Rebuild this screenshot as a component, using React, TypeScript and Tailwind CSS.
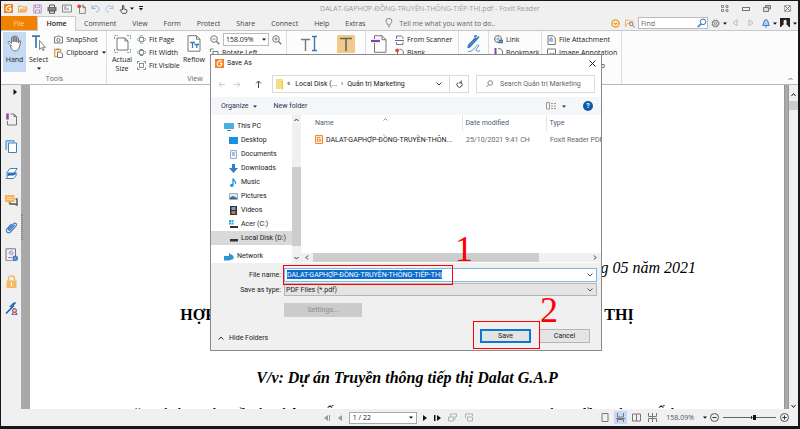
import React from "react";

type Kids = { children?: React.ReactNode };

function Logo({ s = 10 }: { s?: number }) {
  return (
    <svg width={s} height={s} viewBox="0 0 10 10" className="shrink-0">
      <rect width="10" height="10" fill="#f6831e" />
      <path d="M7.6 1.8C4.6 1.8 2.6 3.2 2.4 5.3c-.1 1.8 1.2 2.8 2.8 2.7 1.5-.1 2.5-1.2 2.5-2.9H5.2M7 3.6v1.5" stroke="#fff" strokeWidth="1.2" fill="none" />
    </svg>
  );
}

function Svg({ w, h, children }: { w: number; h: number } & Kids) {
  return (
    <svg width={w} height={h} viewBox={`0 0 ${w} ${h}`} fill="none" stroke="#777" className="shrink-0">
      {children}
    </svg>
  );
}

const Down = ({ c = "#111" }: { c?: string }) => (
  <svg width="4" height="3" viewBox="0 0 4 3" className="shrink-0"><path d="M0 0.4h4L2 2.8z" fill={c} /></svg>
);

function TitleBar() {
  return (
    <header className="flex h-[15px] shrink-0 items-center bg-[#f0f0f0] pl-[3px] pr-[7px]">
      <div className="flex items-center gap-[5px]">
        <Logo s={9} />
        <button aria-label="Open"><Svg w={10} h={10}><path d="M.6 8.5V2h3l1 1h4v1.5" stroke="#dba352" /><path d="M.6 8.7 2.5 4.6H10L8.2 8.7z" fill="#f0b765" stroke="none" /></Svg></button>
        <button aria-label="Save"><Svg w={9} h={10}><path d="M.8 1h7.4v8H.8zM2.5 1v2.6h4V1M2.5 9V6h4v3" stroke="#b495c6" /></Svg></button>
        <button aria-label="Print"><Svg w={10} h={10}><path d="M2.5 3V1h5v2M2.5 7h5v2.3h-5z" stroke="#555" /><rect x=".5" y="3" width="9" height="4.2" fill="#666" stroke="none" /><path d="M2 5h6" stroke="#8cb4dc" /></Svg></button>
        <button aria-label="Mail"><Svg w={10} h={9}><path d="M.5 1h9v7h-9zM2 3h2.5M2 5h5" stroke="#888" /></Svg></button>
        <button aria-label="New"><Svg w={9} h={10}><path d="M2.5 3v6.4h5.8V3.4L6 1.2H4.5" stroke="#888" /><path d="M6 1v2.6h2.5" stroke="#777" /><circle cx="2.2" cy="2.3" r="1.9" fill="#e0443a" stroke="none" /></Svg></button>
        <button aria-label="Undo"><Svg w={9} h={9}><path d="M1 1v3.5h3.5M1.2 4.3C2.5 1.8 6 1.2 7.6 3.4 8.8 5.4 7.5 7.5 5 8.3" stroke="#8fb0d8" /></Svg></button>
        <button aria-label="Redo"><Svg w={9} h={9}><path d="M8 1v3.5H4.5M7.8 4.3C6.5 1.8 3 1.2 1.4 3.4.2 5.4 1.5 7.5 4 8.3" stroke="#a9c0dd" /></Svg></button>
        <button aria-label="Touch mode" className="flex items-center gap-[2px]"><Svg w={9} h={10}><path d="M3.5 6V1.5h1.3V5l3 .8v2L7 9.4H3.5L1 6.3l1-.6z" stroke="#555" /></Svg><Down /></button>
        <button aria-label="Customize"><Svg w={4} h={5}><path d="M0 .5h4" stroke="#111" /><path d="M0 2h4L2 4.6z" fill="#111" stroke="none" /></Svg></button>
      </div>
      <div className="flex-1 pr-1 text-center text-[7px] leading-[15px] text-[#9c9c9c]">DALAT-GAPHỢP-ĐỒNG-TRUYỀN-THÔNG-TIẾP-THỊ.pdf - Foxit Reader</div>
      <div className="flex items-center gap-[13px]">
        <button aria-label="Full screen"><Svg w={8} h={7}><path d="M.5.5h2v2h-2zM5 .5h2v2H5zM.5 4.5h2v2h-2zM5 4.5h2v2H5z" stroke="#888" /></Svg></button>
        <button aria-label="Minimize"><Svg w={8} h={4}><rect x=".5" y=".5" width="7" height="3" /></Svg></button>
        <button aria-label="Restore"><Svg w={8} h={7}><path d="M2.5.5h5v3.5h-5z" fill="#bbb" /><path d="M.5 2.5h5v4h-5z" fill="#ddd" /></Svg></button>
        <button aria-label="Close"><Svg w={7} h={7}><rect x=".5" y=".5" width="6" height="6" stroke="#aaa" /><path d="m1 1 5 5M6 1 1 6" stroke="#777" /></Svg></button>
      </div>
    </header>
  );
}

function TabBar() {
  return (
    <nav className="flex h-[15px] shrink-0 items-stretch border-b border-[#c8c8c8] bg-[#f0f0f0] text-[7px] leading-[15px] text-[#444]">
      <button className="w-9 bg-[#f08200] text-[#fbd7a8]">File</button>
      <button className="-mb-px h-[15px] w-[39px] border-x border-t border-[#c8c8c8] bg-[#fcfcfc] leading-[14px] font-semibold text-[#222]">Home</button>
      <div className="flex gap-4 pl-2">
        {["Comment", "View", "Form", "Protect", "Share", "Connect", "Help", "Extras"].map((t) => <button key={t}>{t}</button>)}
      </div>
      <label className="flex flex-1 items-center gap-[6px] pl-5">
        <Svg w={8} h={10}><path d="M2.8 7C2.8 5.5 1 5 1 3.2a2.9 2.9 0 0 1 5.9 0C6.9 5 5 5.5 5 7zM3 8.8h2" stroke="#888" /></Svg>
        <input className="w-28 bg-transparent outline-none placeholder:text-[#666]" placeholder="Tell me what you want to do.." />
      </label>
      <div className="flex items-center gap-[3px] pr-px">
        <button aria-label="Favorites"><Svg w={9} h={9}><circle cx="4.5" cy="4.5" r="3.5" stroke="#f0a13c" strokeWidth="1.6" fill="#fff" /><path d="M4.5 6.6 2.6 4.7c-.5-1.5 1.2-2 1.9-.8.7-1.2 2.4-.7 1.9.8z" fill="#f0a13c" stroke="none" /></Svg></button>
        <button aria-label="Search folder" className="pl-[2px]"><Svg w={10} h={9}><path d="M.5 8V1h3l1 1h4M.5 8l2-4H5" stroke="#eeb368" /><circle cx="6.3" cy="5" r="1.8" /><path d="m7.6 6.4 2 2.2" /></Svg></button>
        <label className="flex h-3 w-[70px] items-center border border-[#bbb] bg-white pl-[2px]">
          <input className="w-0 flex-1 outline-none placeholder:text-[#666]" placeholder="Find" />
          <Svg w={10} h={10}><circle cx="6" cy="3.8" r="2.8" stroke="#2f76bd" /><path d="m4 6-3.2 3" stroke="#2f76bd" strokeWidth="1.6" /></Svg>
        </label>
        <button aria-label="Settings" className="flex items-center gap-[3px]"><Svg w={9} h={9}><circle cx="4.5" cy="4.5" r="3.5" strokeDasharray="1.8 1" /><circle cx="4.5" cy="4.5" r="2.9" /><circle cx="4.5" cy="4.5" r="1" /></Svg><Down /></button>
        <button aria-label="Previous" className="pl-[2px]"><Svg w={6} h={8}><path d="M5 .8v6L1 3.8z" stroke="#bbb" /></Svg></button>
        <button aria-label="Next" className="pl-[7px]"><Svg w={6} h={8}><path d="M1 .8v6l4-3z" stroke="#bbb" /></Svg></button>
        <button aria-label="Notifications" className="flex items-center gap-[3px] pl-[5px]"><Svg w={8} h={10}><path d="M.6 7.5C2 6.2 1.2 2 4 1.5c2.8.5 2 4.7 3.4 6z" fill="#a9cdef" stroke="#3b83c9" /><path d="M3 9h2" stroke="#3b83c9" /></Svg><Down /></button>
        <button aria-label="Account" className="flex items-center gap-[3px]"><Svg w={10} h={10}><rect width="10" height="9" fill="#222" stroke="none" /><path d="M3.5 4a1.6 2.2 0 1 1 3.2 0c0 1.5-.6 1.8-.3 2.6L8.5 8v2h-7V8l2.2-1.4C4 5.8 3.5 5.5 3.5 4z" fill="#eee" stroke="none" /></Svg><Down /></button>
      </div>
    </nav>
  );
}

function Item({ icon, children }: { icon: React.ReactNode } & Kids) {
  return <button className="flex h-[13px] items-center gap-[3px] whitespace-nowrap">{icon}{children}</button>;
}

function Ribbon() {
  return (
    <section className="flex h-[54px] shrink-0 items-stretch border-b border-[#b9b9b9] bg-[#fcfcfc] text-[7px] leading-[9px] text-[#222]">
      <div className="flex w-[106px] flex-col justify-between border-r border-[#ddd] pl-[2px]">
        <div className="flex items-start">
          <button className="mt-px flex h-10 w-6 flex-col items-center bg-[#c5daf5] pt-[3px]">
            <Svg w={16} h={17}><path d="M4.5 11 1.2 7.6c-.5-1.2.8-1.7 1.6-.9L4.5 8.4V3c.2-1.1 1.5-1.1 1.7 0v4-5.2c.2-1.1 1.6-1.1 1.8 0V7 1.800c.2-1.100 1.600-1.100 1.800 0V7.200 3.400c.2-1 1.500-1 1.700 0V8l.8-2c.8-.8 1.700-.2 1.400.7l-1.500 6c-.6 2-2 3.300-4.200 3.300-2.500 0-3.500-2-4.500-5z" fill="#fff" stroke="#555" strokeWidth=".8" /></Svg>
            <span className="pt-[3px]">Hand</span>
          </button>
          <button className="ml-[2px] mt-1 flex w-[22px] flex-col items-center">
            <Svg w={16} h={17}><path d="M1 1.2h8M5 1v12" stroke="#3978bd" strokeWidth="1.7" /><path d="M8.5 5.5v9l2-1.8 1.5 3 1.2-.7-1.5-2.7h2.8z" fill="#fff" stroke="#777" strokeWidth=".9" /></Svg>
            <span className="pt-[3px]">Select</span>
            <span className="pt-[3px]"><Down /></span>
          </button>
          <div className="ml-[5px] mt-[2px] flex flex-col">
            <Item icon={<Svg w={9} h={9}><path d="M.5 2h2l1-1h2l1 1h2v6h-8z" /><circle cx="4.5" cy="5" r="1.6" /></Svg>}>SnapShot</Item>
            <Item icon={<Svg w={9} h={10}><path d="M3 8.5H.7V1.5h6v2" stroke="#e2a04a" strokeWidth="1.3" /><path d="M3.5 4h3l2 2v3.5h-5z" /><path d="M2.5 1.2h2.4" /></Svg>}>Clipboard <span className="pl-px"><Down /></span></Item>
          </div>
        </div>
        <div className="pb-px text-center leading-[9px] text-[#666]">Tools</div>
      </div>
      <div className="flex w-[180px] flex-col justify-between border-r border-[#ddd]">
        <div className="flex items-start">
          <button className="mt-1 ml-1 flex w-[22px] flex-col items-center">
            <Svg w={17} h={18}><path d="M3 3h8l3 3v9H3z" fill="#fff" /><path d="M11 3v3h3" /><path d="M.5 4V.5H4M13 .5h3.5V4M.5 14v3.5H4M13 17.5h3.5V14" stroke="#6aaa8c" strokeDasharray="2 .8" /></Svg>
            <span className="pt-[2px]">Actual<br />Size</span>
          </button>
          <div className="mt-[2px] ml-1 flex w-[46px] flex-col">
            {["Fit Page", "Fit Width", "Fit Visible"].map((t, i) => (
              <Item key={t} icon={<Svg w={9} h={9}><rect x="2.5" y="2.5" width="4" height="4" strokeWidth=".8" /><path d={i === 2 ? "M.5 2.5v-2h2M6.5.5h2v2M.5 6.5v2h2M6.5 8.5h2v-2" : i ? "M1.5 3 .3 4.5 1.5 6M7.5 3l1.2 1.5L7.5 6M3 1.5h3M3 7.5h3" : "M3 1.5 4.5.3 6 1.5M3 7.5l1.5 1.2L6 7.5M1.5 3 .3 4.5 1.5 6M7.5 3l1.2 1.5L7.5 6"} stroke="#5c9d80" /></Svg>}>{t}</Item>
            ))}
          </div>
          <button className="mt-1 flex w-[22px] flex-col items-center">
            <Svg w={14} h={17}><path d="M1 .7h8.5l3.5 3.5v12H1z" fill="#fff" /><path d="M9.5.7v3.5H13" /><path d="M3 7.5h5M5.5 7.5V13M7.5 9.5H12M9.8 9.5V13" stroke="#3978bd" strokeWidth="1.3" /></Svg>
            <span className="pt-[3px]">Reflow</span>
          </button>
          <div className="mt-[2px] ml-[5px] flex flex-col">
            <div className="flex h-[13px] items-center gap-[3px]">
              <button aria-label="Zoom out"><Svg w={10} h={10}><circle cx="4" cy="4" r="3.3" /><path d="M2.5 4h3" stroke="#4c9a76" /><path d="m6.5 6.5 2.8 2.8" strokeWidth="1.3" /></Svg></button>
              <button className="flex h-[13px] w-[46px] items-center justify-between border border-[#bbb] bg-white px-[2px]">158.09% <Down /></button>
              <button aria-label="Zoom in"><Svg w={10} h={10}><circle cx="4" cy="4" r="3.3" /><path d="M2.5 4h3M4 2.5v3" stroke="#4c9a76" /><path d="m6.5 6.5 2.8 2.8" strokeWidth="1.3" /></Svg></button>
            </div>
            <Item icon={<Svg w={9} h={9}><path d="M3 3.5h5v5H3z" /><path d="M.5 4V1h3" stroke="#5c9d80" /></Svg>}>Rotate Left</Item>
          </div>
        </div>
        <div className="pb-px pr-[3px] text-center leading-[9px] text-[#666]">View</div>
      </div>
      <div className="flex w-[79px] items-start gap-[18px] border-r border-[#ddd] pt-1 pl-[14px]">
        <button aria-label="Typewriter"><Svg w={18} h={18}><path d="M0 4.5h9M4.5 4.5V16" strokeWidth="1.4" /><path d="M11 1.5h5M11 15.5h5M13.5 1.5v14" stroke="#3978bd" strokeWidth="1.4" /></Svg></button>
        <button aria-label="Highlight" className="flex size-[18px] items-center justify-center bg-[#f3c98a]"><Svg w={14} h={16}><path d="M1 2.5h12M7 2.5V15" stroke="#666" strokeWidth="1.6" /></Svg></button>
      </div>
      <div className="flex w-[93px] items-start gap-2 border-r border-[#ddd] pl-[5px]">
        <button aria-label="Convert" className="mt-1"><Svg w={16} h={18}><path d="M3.5 4V.7H11l4 4v12.6H3.5V8M11 .7v4h4" /><path d="M0 6h9" stroke="#8244a8" strokeWidth="2.2" /></Svg></button>
        <div className="mt-[2px] flex flex-col">
          <Item icon={<Svg w={9} h={10}><path d="M1.5 4V1h5L8 2.5V4M1.5 7v2.5H8V7" /><path d="M0 5.5h9" stroke="#3978bd" /></Svg>}>From Scanner</Item>
          <Item icon={<Svg w={9} h={10}><path d="M2.5 3v6h5.8V3.4L6 1.2H4.5" /><circle cx="2.2" cy="2.3" r="1.9" fill="#e0443a" stroke="none" /></Svg>}>Blank</Item>
        </div>
      </div>
      <div className="flex w-[30px] items-start justify-center border-r border-[#ddd] pt-1">
        <button aria-label="Sign"><Svg w={16} h={18}><path d="m2 13 1-3 7-7.5M9 6l4-4.5M8 1.5l3-1M3 12.5l8-8.5" stroke="#3978bd" strokeWidth="1.7" /><path d="M2 16.5c3 .5 5-1.500 8-5 2-2.500 4-1.500 2 .5-3 3-3 4.500 2 4" stroke="#5a93d0" /></Svg></button>
      </div>
      <div className="flex w-[53px] flex-col border-r border-[#ddd] pt-[2px] pl-[5px]">
        <Item icon={<Svg w={9} h={9}><circle cx="4" cy="4" r="3.5" /><path d="M4 .5v7M.5 4h7" strokeWidth=".6" /><path d="M4 7.5h4.5v-2H5" stroke="#3978bd" strokeWidth="1.3" /></Svg>}>Link</Item>
        <Item icon={<Svg w={9} h={9}><path d="M4 .7h2.5L8.5 3v5.5H3" /><path d="M1.5 0v6" stroke="#8244a8" strokeWidth="2" /></Svg>}>Bookmark</Item>
      </div>
      <div className="flex w-20 flex-col border-r border-[#ddd] pt-[2px] pl-[5px]">
        <Item icon={<Svg w={9} h={10}><path d="M1 .7h5L8.3 3v6.5H1z" /><path d="M3 6.5V3.5c.3-1 1.7-1 2 0V7" stroke="#3978bd" /></Svg>}>File Attachment</Item>
        <Item icon={<Svg w={9} h={9}><path d="M.5 1h8v7h-8z" /><path d="m1 7.5 2.5-3L5 6l1.5-1.5L8 6.5v1z" fill="#5c9d80" stroke="none" /></Svg>}>Image Annotation</Item>
        <Item icon={<Svg w={9} h={9}><path d="M.5 1h8v7h-8zM3.5 3v3.5l3-1.7z" /></Svg>}>Audio &amp; Video</Item>
      </div>
      <div className="flex flex-1 items-end justify-end pr-[5px] pb-[3px]"><button aria-label="Collapse"><Svg w={5} h={4}><path d="M.5 3 2.5 1l2 2" /></Svg></button></div>
    </section>
  );
}

function SideBar() {
  const b = "#3f82c4";
  const items: [string, React.ReactNode][] = [
    ["Bookmarks", <><path d="M5.5 1H9l2.5 2.5V12h-9V8M9 1v2.5h2.5" /><path d="M2.5.5v6" stroke="#8244a8" strokeWidth="2.5" /></>],
    ["Pages", <><path d="M1 10V.8h8v1.5" stroke={b} fill="#cfe2f5" /><path d="M3.5 3h8v9.5h-8z" fill="#fff" stroke={b} /></>],
    ["Layers", <><path d="m1 11.5 3.5-4.3H12l-3.5 4.3z" stroke={b} fill="#fff" /><path d="m.8 8.5 3.5-3.3H12L8.5 8.5z" fill="#1f68b0" stroke="none" /><path d="M1.5 6 5 1.5h7.2L9 6z" stroke={b} fill="#fff" /></>],
    ["Comments", <><path d="M10.5 5h1.5v6l-2-1H5V8" stroke="#555" strokeWidth="1.4" /><path d="M0 1h9.5v7H5l-2 2V8H0z" fill="#f6b35b" stroke="none" /><path d="M2 3.5h6M2 5.5h6" stroke="#fbdcae" /></>],
    ["Attachments", <path d="M9.5 4 5 9c-.8.8-2-.2-1.2-1L8.5 2.8c1.7-1.7 4 .3 2.5 2L5.5 11c-2.5 2-5.3-.5-3.5-3L6.5 3" stroke={b} strokeWidth="1.2" />],
    ["Signatures", <><path d="M1 .8h9.5v12H1z" /><path d="M4 5.5c0-3 4-3 4-.5S4.5 7 5.5 4.5M3 9.5h4" stroke="#a05fc0" strokeWidth=".9" /><circle cx="10.3" cy="10.3" r="2.7" fill="#3978bd" stroke="none" /><path d="m9.2 11.3 2.2-2" stroke="#fff" strokeWidth=".8" /></>],
    ["Security", <><path d="M3.5 6V3.5c0-3.5 6-3.5 6 0V6" stroke="#f0b55f" strokeWidth="1.4" /><rect x="1.5" y="5.5" width="10" height="7.5" fill="#f3ba66" stroke="none" /><path d="M6.5 7.5v3.5" stroke="#fff" strokeWidth="1.3" /></>],
    ["Digital signatures", <><path d="M1 11.5 9 3.5M8 3l2.5-2.5M5 5l4-4" stroke="#1f68b0" strokeWidth="1.7" /><circle cx="9.5" cy="8.5" r="2" stroke="#8244a8" fill="#f6c94c" /><path d="m8.3 10-1.5 3 2.7-1 2.7 1-1.5-3" stroke="#8244a8" /></>],
  ];
  return (
    <aside className="flex w-5 shrink-0 flex-col items-center bg-[#f0f0f0] pt-[4px]">
      <button aria-label="Expand" className="mb-[18px] ml-2"><Svg w={4} h={6}><path d="M.5 0v6L4 3z" fill="#111" stroke="none" /></Svg></button>
      <div className="flex flex-col gap-[14px]">
        {items.map(([n, p]) => <button key={n} aria-label={n}><Svg w={13} h={13}>{p}</Svg></button>)}
      </div>
    </aside>
  );
}

function Document() {
  return (
    <main className="flex min-h-0 flex-1">
      <SideBar />
      <div className="flex w-[9px] shrink-0 items-center bg-[#a9a9a9]"><span className="mb-10 h-[26px] w-[2px] border-x border-dotted border-[#888]" /></div>
      <article className="flex min-w-0 flex-1 flex-col overflow-hidden bg-white font-['Liberation_Serif','Times_New_Roman',serif] text-base leading-5 text-black">
        <p className="mt-[173px] pr-[88px] text-right italic">Hà Nội, ngày 15 tháng 05 năm 2021</p>
        <h1 className="mt-[27px] text-center font-bold whitespace-nowrap">HỢP ĐỒNG CUNG CẤP DỊCH VỤ TRUYỀN THÔNG TIẾP THỊ</h1>
        <h2 className="mt-[43px] text-center font-bold italic whitespace-nowrap">V/v: Dự án Truyền thông tiếp thị Dalat G.A.P</h2>
        <p className="mt-[17px] text-center whitespace-nowrap">Căn cứ theo nhu cầu hai bên, CẤP DỊCH VU TRUYEN THONG, hợp đồng theo SỐ hai</p>
      </article>
      <div className="w-[5px] shrink-0 border-x border-[#999] bg-[#aaa]" />
      <div className="flex w-[9px] shrink-0 flex-col items-center bg-[#f0f0f0] pt-[7px]">
        <Svg w={5} h={5}><path d="M.5 4 2.5 1.5 4.5 4" stroke="#222" /></Svg>
        <span className="mt-[4px] h-[9px] w-full bg-[#cdcdcd]" />
        <span className="flex-1" />
        <Svg w={5} h={5}><path d="M.5 1 2.5 3.5 4.5 1" stroke="#222" /></Svg>
      </div>
    </main>
  );
}

function StatusBar() {
  return (
    <footer className="flex h-[17px] shrink-0 items-center bg-[#f0f0f0] pr-[9px] text-[7px] leading-3 text-[#222]">
      <div className="flex flex-1 items-center justify-center gap-[6px] pl-[197px]">
        <button aria-label="First page"><Svg w={8} h={6}><path d="M4 0v6L0 3zM5 0h1v6H5z" fill="#999" stroke="none" /></Svg></button>
        <button aria-label="Previous page"><Svg w={5} h={6}><path d="M4 0v6L0 3z" fill="#999" stroke="none" /></Svg></button>
        <button className="flex h-3 w-[68px] items-center justify-between border border-[#aaa] bg-white px-[3px] leading-[10px]">1 / 22 <Down /></button>
        <button aria-label="Next page"><Svg w={5} h={6}><path d="M0 0v6l4-3z" fill="#111" stroke="none" /></Svg></button>
        <button aria-label="Last page"><Svg w={8} h={6}><path d="M3 0v6l4-3zM0 0h1.5v6H0z" fill="#111" stroke="none" /></Svg></button>
        <button aria-label="Previous view"><Svg w={10} h={9}><path d="M2.5 4V1h6v3M.5 4h5v4h-5zM7 3v4" stroke="#a9b9b0" /></Svg></button>
        <button aria-label="Next view"><Svg w={10} h={9}><path d="M1.5 5V1h7v2M3.5 4h5v4h-5z" stroke="#a9b9b0" /></Svg></button>
      </div>
      <div className="flex items-center gap-[3px]">
        <button aria-label="Single page" className="p-[2px]"><Svg w={8} h={9}><path d="M1 .5h6v8H1z" /></Svg></button>
        <button aria-label="Continuous" className="bg-[#c5daf5] p-[2px]"><Svg w={9} h={9}><path d="M1.5 0v4h6V0M0 5.5h9M1.5 9V6.5h6V9" /></Svg></button>
        <button aria-label="Facing" className="p-[2px]"><Svg w={9} h={9}><path d="M.5 1h4v7h-4zM4.5 1h4v7h-4z" /></Svg></button>
        <button aria-label="Continuous facing" className="p-[2px]"><Svg w={9} h={9}><path d="M.5 0v3.5h8V0M4.5 0v9M.5 9V5.5h8V9" /></Svg></button>
        <button className="ml-[4px] flex items-center gap-[9px] text-[#555]">158.09% <Down /></button>
        <div className="flex items-center gap-[4px]">
          <button aria-label="Zoom out"><Svg w={9} h={9}><circle cx="4.5" cy="4.5" r="4" stroke="#555" /><path d="M2.5 4.5h4" stroke="#333" /></Svg></button>
          <span className="flex h-[5px] w-[53px] items-center justify-center bg-[linear-gradient(#666,#666)] bg-[length:100%_1px] bg-center bg-no-repeat pl-2"><span className="mr-px h-[3px] w-px bg-[#333]" /><span className="h-[5px] w-[3px] bg-[#111]" /></span>
          <button aria-label="Zoom in"><Svg w={9} h={9}><circle cx="4.5" cy="4.5" r="4" stroke="#555" /><path d="M2.5 4.5h4M4.5 2.5v4" stroke="#333" /></Svg></button>
        </div>
      </div>
    </footer>
  );
}

const places: [string, React.ReactNode][] = [
  ["Desktop", <rect x="0" y="1" width="9" height="7" fill="#1a8fe3" stroke="none" />],
  ["Documents", <><path d="M1.5.5h6v8h-6z" fill="#eef6fc" stroke="#9ab" /><path d="M3 3h3M3 5h3" stroke="#3c8ed0" /></>],
  ["Downloads", <path d="M3 0h3v4h3L4.5 9 0 4h3z" fill="#2f80c8" stroke="none" />],
  ["Music", <><path d="M4 7V.5C4.5 2.5 7.5 3 6.5 6" stroke="#1a8fe3" strokeWidth="1.3" /><ellipse cx="2.8" cy="7.5" rx="1.8" ry="1.4" fill="#1a8fe3" stroke="none" /></>],
  ["Pictures", <><path d="M.5 1.5h8v6h-8z" fill="#d7ecf8" stroke="#aaa" /><path d="M1 7V5.5l3-1.5 4 2v1z" fill="#376d8e" stroke="none" /></>],
  ["Videos", <><rect x="1" y="0" width="7" height="9" fill="#333" stroke="none" /><rect x="2.5" y="1" width="4" height="3" fill="#7a9fd4" stroke="none" /><rect x="2.5" y="5" width="4" height="3" fill="#b0824a" stroke="none" /></>],
  ["Acer (C:)", <><path d="M0 0h2v2H0zM2.5 0h2v2h-2zM0 2.5h2v2H0zM2.5 2.5h2v2h-2z" fill="#29abe2" stroke="none" /><rect x="1" y="6" width="8" height="2" fill="#333" stroke="none" /></>],
  ["Local Disk (D:)", <rect x="1" y="5" width="8" height="2.5" fill="#333" stroke="none" />],
];

function Dialog() {
  return (
    <div role="dialog" aria-label="Save As" className="absolute top-[53px] left-[209px] flex h-[297px] w-[392px] flex-col border border-[#8a8a8a] bg-white font-['Roboto','Open_Sans',sans-serif] text-[7px] leading-[10px] text-[#222]">
      <div className="flex h-4 items-center justify-between pr-[5px] pl-[4px]">
        <div className="flex items-center gap-[3px]"><Logo s={9} />Save As</div>
        <button aria-label="Close"><Svg w={7} h={7}><path d="m.5.5 6 6M6.5.5l-6 6" stroke="#222" /></Svg></button>
      </div>
      <div className="flex h-[26px] items-center pr-[6px] pl-[7px]">
        <div className="flex w-[49px] items-center gap-[9px]">
          <button aria-label="Back"><Svg w={7} h={7}><path d="M7 3.5H1M3.5 1 1 3.5 3.5 6" stroke="#ccc" /></Svg></button>
          <button aria-label="Forward"><Svg w={7} h={7}><path d="M0 3.5h6M3.5 1 6 3.5 3.5 6" stroke="#ccc" /></Svg></button>
          <button aria-label="Up" className="ml-[5px]"><Svg w={7} h={8}><path d="M3.5 8V1M1 3.5 3.5 1 6 3.5" stroke="#444" /></Svg></button>
        </div>
        <div className="ml-[5px] flex h-[18px] w-[197px] items-center border border-[#dadada]">
          <Svg w={14} h={12}><path d="M3 1h7v10H3z" fill="#f8dc80" stroke="none" /><path d="M9.5 3v8.5" stroke="#e9c257" /></Svg>
          <span>«</span><span className="pl-[5px]">Local Disk (...</span><span className="px-1">›</span><span>Quản trị Marketing</span>
          <span className="flex-1" />
          <button aria-label="History" className="pr-[7px]"><Svg w={6} h={4}><path d="M.5.5 3 3 5.5.5" stroke="#444" /></Svg></button>
          <button aria-label="Refresh" className="flex h-full w-[19px] items-center justify-center border-l border-[#dadada]"><Svg w={7} h={8}><path d="M2 2.5A2.6 2.6 0 1 0 5 2.5M5.2.5v2.3H3" stroke="#444" /></Svg></button>
        </div>
        <label className="ml-[7px] flex h-[18px] flex-1 items-center gap-[7px] border border-[#dadada] pl-[9px]">
          <Svg w={7} h={8}><circle cx="4.2" cy="3" r="2.3" stroke="#888" /><path d="M2.6 4.7.5 7" stroke="#888" /></Svg>
          <input className="w-0 flex-1 outline-none placeholder:text-[#666]" placeholder="Search Quản trị Marketing" />
        </label>
      </div>
      <div className="flex h-[18px] items-center bg-[#f5f6f7] pr-2 pl-[10px] text-[#1e395b]">
        <button className="flex items-center gap-1">Organize <Down c="#1e395b" /></button>
        <button className="ml-[17px]">New folder</button>
        <span className="flex-1" />
        <button aria-label="View" className="flex items-center gap-[6px]"><Svg w={10} h={8}><path d="M.5.5h3v6.5h-3zM5 1.5h2M8 1.5h2M5 4h2M8 4h2M5 6.5h2M8 6.5h2" stroke="#999" /></Svg><Down c="#1e395b" /></button>
        <button aria-label="Help" className="ml-[17px] flex size-[10px] items-center justify-center rounded-full bg-[#0b5cad] text-[7px] leading-none font-bold text-white">?</button>
      </div>
      <div className="flex h-[148px]">
        <div className="flex w-[81px] flex-col pt-1">
          <div className="flex h-[14px] items-center gap-[3px] pl-[13px]"><Svg w={10} h={9}><rect x="0" y="1" width="10" height="6" fill="#4aaee8" stroke="none" /><path d="M3 8.5h4" stroke="#5b7f99" /></Svg>This PC</div>
          {places.map(([n, p]) => (
            <div key={n} className={"flex h-[14px] items-center gap-[3px] pl-[18px] " + (n.startsWith("Local") ? "bg-[#d9d9d9]" : "")}><Svg w={9} h={9}>{p}</Svg>{n}</div>
          ))}
          <div className="mt-[4px] flex h-[14px] items-center gap-[3px] pl-[13px]"><Svg w={10} h={9}><path d="M0 4h5V1l4.5 3v3L5 8.5H0z" fill="#2f93d6" stroke="none" /></Svg>Network</div>
        </div>
        <div className="flex w-[9px] flex-col items-center bg-[#f0f0f0] pt-[3px] pb-[3px]">
          <Svg w={5} h={4}><path d="M.5 3 2.5 1l2 2" stroke="#333" /></Svg>
          <span className="mt-[45px] h-[79px] w-full bg-[#cdcdcd]" />
          <span className="flex-1" />
          <Svg w={5} h={4}><path d="m.5 1 2 2 2-2" stroke="#333" /></Svg>
        </div>
        <div className="flex min-w-0 flex-1 flex-col overflow-hidden">
          <table className="w-full table-fixed text-left">
            <thead className="text-[#4c607a]"><tr className="h-4 [&>th]:font-normal">
              <th className="w-[161px] pl-[14px]"><span className="flex items-start justify-between pr-[74px]">Name<Svg w={5} h={3}><path d="M.5 2.5 2.5.5l2 2" stroke="#888" /></Svg></span></th><th className="w-[84px] border-l border-[#e5e5e5] pl-[3px]">Date modified</th><th className="border-l border-[#e5e5e5] pl-[3px]">Type</th>
            </tr></thead>
            <tbody><tr className="h-[17px] whitespace-nowrap text-[#666]">
              <td className="pl-[14px] text-[#222]"><span className="flex items-center gap-[3px]"><Svg w={8} h={9}><path d="M.5.5h7v8h-7z" fill="#fdebd8" stroke="#f08a2c" /><path d="M5.5 2.5h-3v3.5h3V4.5H4" stroke="#f08a2c" /></Svg>DALAT-GAPHỢP-ĐỒNG-TRUYỀN-THÔN...</span></td>
              <td className="pl-[4px]">25/10/2021 9:41 CH</td><td className="pl-[4px]">Foxit Reader PDF</td>
            </tr></tbody>
          </table>
          <span className="flex-1" />
          <div className="mb-px flex h-[9px] items-center bg-[#f0f0f0] px-1">
            <Svg w={4} h={5}><path d="M3 .5 1 2.5l2 2" stroke="#333" /></Svg><span className="ml-1 h-full w-[226px] bg-[#cdcdcd]" /><span className="flex-1" /><Svg w={4} h={5}><path d="m1 .5 2 2-2 2" stroke="#333" /></Svg>
          </div>
        </div>
      </div>
      <div className="flex flex-1 flex-col bg-[#f0f0f0] pr-1">
        <div className="mt-1 flex h-[15px] items-center">
          <label htmlFor="fname" className="w-[73px] pr-[3px] text-right">File name:</label>
          <div className="flex h-[14px] flex-1 items-center border border-[#7ab8ee] bg-white pr-[3px] pl-[2px]">
            <span className="flex flex-1"><input id="fname" className="field-sizing-content h-[9px] bg-[#0a6cce] text-white outline-none" defaultValue="DALAT-GAPHỢP-ĐỒNG-TRUYỀN-THÔNG-TIẾP-THỊ" /></span>
            <Svg w={6} h={4}><path d="M.5.5 3 3 5.5.5" stroke="#555" /></Svg>
          </div>
        </div>
        <div className="mt-px flex h-[13px] items-center">
          <label htmlFor="ftype" className="w-[73px] pr-[3px] text-right">Save as type:</label>
          <div className="flex h-[13px] flex-1 items-center border border-[#b5b5b5] bg-[#e4e4e4] pr-[3px] pl-px">
            <select id="ftype" className="flex-1 appearance-none bg-transparent"><option>PDF Files (*.pdf)</option></select>
            <Svg w={6} h={4}><path d="M.5.5 3 3 5.5.5" stroke="#555" /></Svg>
          </div>
        </div>
        <button disabled className="mt-[7px] ml-[73px] h-[14px] w-[78px] bg-[#cbcbcb] text-[#8b8b8b]">Settings...</button>
        <div className="mt-[12px] flex h-[14px] items-center pr-[7px]">
          <button className="mt-[3px] flex flex-1 items-center gap-[5px] pl-[7px]"><Svg w={6} h={4}><path d="M.5 3.5 3 1l2.5 2.5" stroke="#333" /></Svg>Hide Folders</button>
          <button className="h-[14px] w-[51px] border-2 border-[#0b78d4] bg-[#e4e4e4] leading-[9px]">Save</button>
          <button className="ml-2 h-[14px] w-[51px] border border-[#b5b5b5] bg-[#e4e4e4] leading-[10px]">Cancel</button>
        </div>
      </div>
    </div>
  );
}

export default function App() {
  return (
    <div className="relative flex h-screen flex-col overflow-hidden border border-r-2 border-b-[3px] border-[#17161b] font-['Open_Sans',sans-serif]">
      <TitleBar />
      <TabBar />
      <Ribbon />
      <Document />
      <StatusBar />
      <Dialog />
      <div className="absolute top-[264px] left-[282px] h-[20px] w-[170px] border border-[#f00]" />
      <div className="absolute top-[320px] left-[472px] h-[28px] w-[67px] border border-[#f00]" />
      <span className="absolute top-[230px] left-[454px] font-['Liberation_Serif',serif] text-[36px] leading-[36px] text-[#f00]">1</span>
      <span className="absolute top-[291px] left-[539px] font-['Liberation_Serif',serif] text-[36px] leading-[36px] text-[#f00]">2</span>
    </div>
  );
}
